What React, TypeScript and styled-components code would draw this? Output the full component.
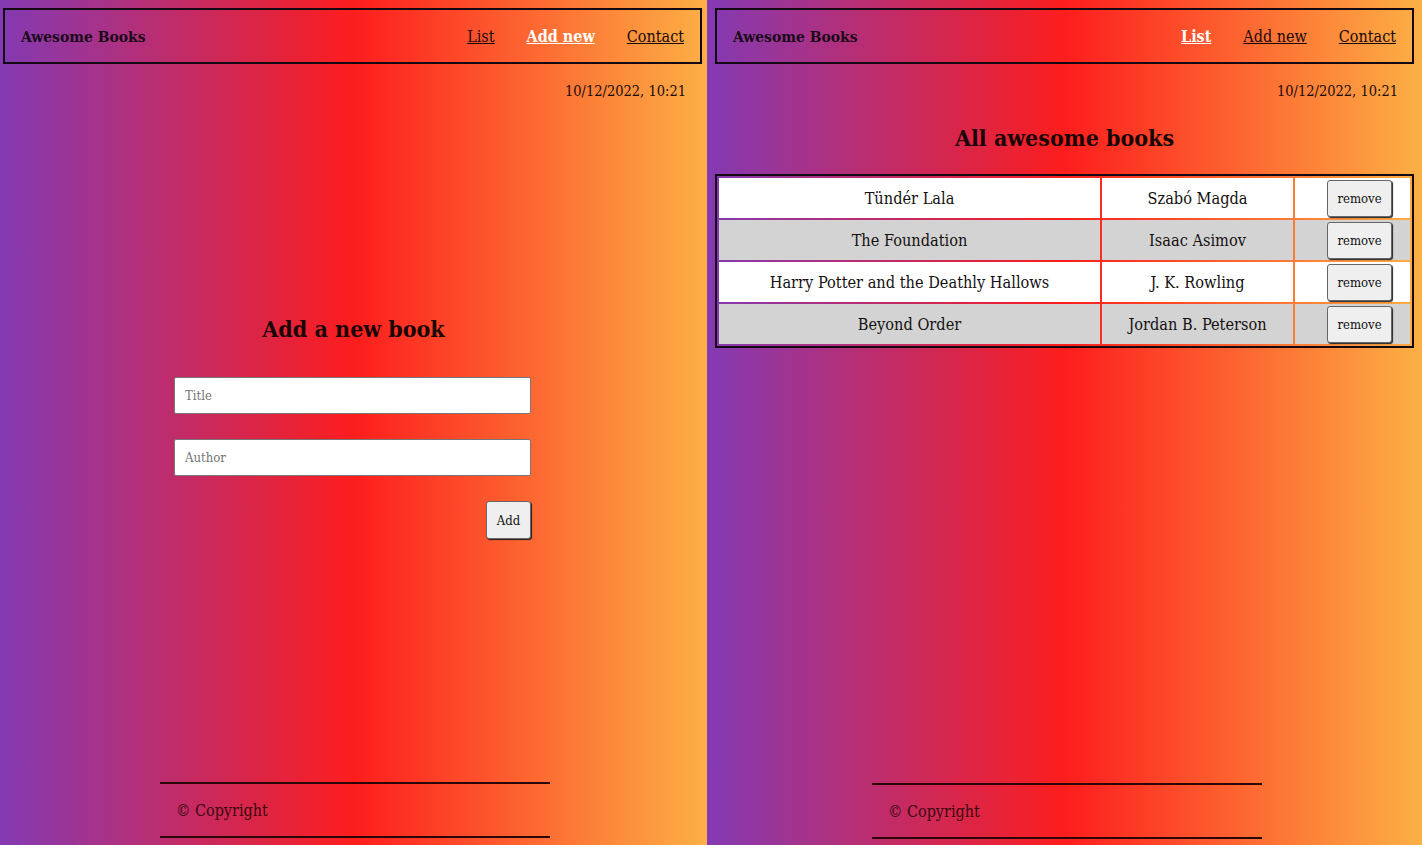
import React from "react";
import styled, { createGlobalStyle } from "styled-components";

const Global = createGlobalStyle`
  * { box-sizing: border-box; }
  html, body { margin: 0; padding: 0; }
  body {
    font-family: "DejaVu Serif Condensed", "DejaVu Serif", serif;
    color: #111;
    overflow: hidden;
  }
`;

const Screen = styled.div`
  display: flex;
  width: 1422px;
  height: 845px;
`;

const Panel = styled.div<{ $w: number }>`
  width: ${(p) => p.$w}px;
  height: 845px;
  display: flex;
  flex-direction: column;
  background: linear-gradient(90deg, #833ab4 0%, #fd1d1d 50%, #fcb045 100%);
`;

const Header = styled.header<{ $ml: number; $mr: number }>`
  margin: 8px ${(p) => p.$mr}px 0 ${(p) => p.$ml}px;
  height: 56px;
  border: 2px solid #140812;
  display: flex;
  align-items: center;
  justify-content: space-between;
  padding: 0 16px 0 16px;
`;

const Brand = styled.h1`
  margin: 0;
  font-size: 15.5px;
  font-weight: bold;
  color: #1a0a1a;
`;

const Nav = styled.nav`
  display: flex;
  gap: 32px;
`;

const NavLink = styled.a<{ $active?: boolean }>`
  font-size: 16px;
  color: ${(p) => (p.$active ? "#fff" : "#1a0a0a")};
  font-weight: ${(p) => (p.$active ? "bold" : "normal")};
  text-decoration: underline;
`;

const DateLine = styled.div<{ $pr: number }>`
  text-align: right;
  padding: 0 ${(p) => p.$pr}px 0 0;
  margin-top: 19px;
  font-size: 14.5px;
  color: #1a0a0a;
`;

const Main = styled.main<{ $pt: number }>`
  flex: 1;
  display: flex;
  flex-direction: column;
  align-items: center;
  padding-top: ${(p) => p.$pt}px;
`;

const Title = styled.h2`
  margin: 0;
  font-size: 23px;
  font-weight: bold;
  color: #1a0606;
  text-align: center;
`;

const Form = styled.form`
  width: 357px;
  margin: 35px 2px 0 0;
  display: flex;
  flex-direction: column;
  gap: 25px;
`;

const Input = styled.input`
  width: 100%;
  height: 37px;
  border: 1px solid #777;
  border-radius: 2px;
  padding: 0 10px;
  font-family: inherit;
  font-size: 13px;
  background: #fff;
  &::placeholder { color: #757575; }
`;

const ButtonRow = styled.div`
  display: flex;
  justify-content: flex-end;
`;

const Button = styled.button`
  font-family: inherit;
  font-size: 13px;
  color: #111;
  background: #efefef;
  border: 1px solid #666;
  border-radius: 3px;
  box-shadow: 1px 1px 1px #222;
  cursor: pointer;
`;

const AddButton = styled(Button)`
  width: 45px;
  height: 38px;
`;

const RemoveButton = styled(Button)`
  width: 65px;
  height: 37px;
`;

const Table = styled.table`
  margin: 23px 8px 0 8px;
  width: calc(100% - 16px);
  border: 2px solid #140812;
  border-spacing: 2px;
`;

const Cell = styled.td<{ $w?: string; $action?: boolean }>`
  height: 40px;
  padding: 0;
  text-align: ${(p) => (p.$action ? "right" : "center")};
  padding-right: ${(p) => (p.$action ? "18px" : "0")};
  width: ${(p) => p.$w || "auto"};
  font-size: 16.2px;
  color: #141010;
`;

const Row = styled.tr<{ $alt: boolean }>`
  & > td { background: ${(p) => (p.$alt ? "#d3d3d3" : "#fff")}; }
`;

const Footer = styled.footer<{ $ml: number; $mb: number }>`
  align-self: flex-start;
  margin-left: ${(p) => p.$ml}px;
  width: 390px;
  height: 56px;
  margin-bottom: ${(p) => p.$mb}px;
  border-top: 2px solid #2a0608;
  border-bottom: 2px solid #2a0608;
  display: flex;
  align-items: center;
  padding-left: 16px;
  font-size: 16px;
  color: #3a0810;
`;

const books = [
  ["Tündér Lala", "Szabó Magda"],
  ["The Foundation", "Isaac Asimov"],
  ["Harry Potter and the Deathly Hallows", "J. K. Rowling"],
  ["Beyond Order", "Jordan B. Peterson"],
];

function HeaderBar({ active, ml, mr }: { active: string; ml: number; mr: number }) {
  return (
    <Header $ml={ml} $mr={mr}>
      <Brand>Awesome Books</Brand>
      <Nav>
        {["List", "Add new", "Contact"].map((l) => (
          <NavLink key={l} href="#" $active={l === active}>
            {l}
          </NavLink>
        ))}
      </Nav>
    </Header>
  );
}

export default function App() {
  return (
    <Screen>
      <Global />
      <Panel $w={707}>
        <HeaderBar active="Add new" ml={3} mr={5} />
        <DateLine $pr={21}>10/12/2022, 10:21</DateLine>
        <Main $pt={216}>
          <Title>Add a new book</Title>
          <Form onSubmit={(e) => e.preventDefault()}>
            <Input placeholder="Title" />
            <Input placeholder="Author" />
            <ButtonRow>
              <AddButton type="submit">Add</AddButton>
            </ButtonRow>
          </Form>
        </Main>
        <Footer $ml={160} $mb={7}>© Copyright</Footer>
      </Panel>
      <Panel $w={715}>
        <HeaderBar active="List" ml={8} mr={8} />
        <DateLine $pr={24}>10/12/2022, 10:21</DateLine>
        <Main $pt={25}>
          <Title>All awesome books</Title>
          <Table>
            <tbody>
              {books.map(([t, a], i) => (
                <Row key={t} $alt={i % 2 === 1}>
                  <Cell $w="381px">{t}</Cell>
                  <Cell $w="191px">{a}</Cell>
                  <Cell $action>
                    <RemoveButton>remove</RemoveButton>
                  </Cell>
                </Row>
              ))}
            </tbody>
          </Table>
        </Main>
        <Footer $ml={165} $mb={6}>© Copyright</Footer>
      </Panel>
    </Screen>
  );
}
